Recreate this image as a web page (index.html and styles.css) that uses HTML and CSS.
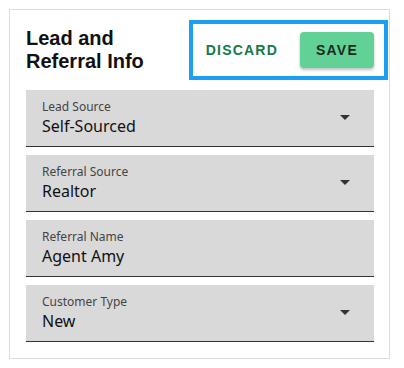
FILE: index.html
```html
<!DOCTYPE html>
<html lang="en">
<head>
    <meta charset="UTF-8">
    <title>Lead and Referral Info</title>
    <link rel="stylesheet" href="styles.css">
</head>
<body>
<div id="lead" class="card">
    <div class="header">
        <h2 class="title">Lead and<br>Referral Info</h2>
        <div class="actions">
            <button class="btn btn-text">Discard</button>
            <button class="btn btn-save">Save</button>
        </div>
    </div>
    <div class="fields">
        <div class="field select">
            <div class="field-body">
                <span class="field-label">Lead Source</span>
                <span class="field-value">Self-Sourced</span>
            </div>
            <svg class="arrow" width="10" height="5" viewBox="0 0 10 5"><path d="M0 0h10L5 5z" fill="#333"/></svg>
        </div>
        <div class="field select">
            <div class="field-body">
                <span class="field-label">Referral Source</span>
                <span class="field-value">Realtor</span>
            </div>
            <svg class="arrow" width="10" height="5" viewBox="0 0 10 5"><path d="M0 0h10L5 5z" fill="#333"/></svg>
        </div>
        <div class="field">
            <div class="field-body">
                <span class="field-label">Referral Name</span>
                <span class="field-value">Agent Amy</span>
            </div>
        </div>
        <div class="field select">
            <div class="field-body">
                <span class="field-label">Customer Type</span>
                <span class="field-value">New</span>
            </div>
            <svg class="arrow" width="10" height="5" viewBox="0 0 10 5"><path d="M0 0h10L5 5z" fill="#333"/></svg>
        </div>
    </div>
</div>
</body>
</html>
```
FILE: styles.css
```css
body{
    margin: 0;
    background: #fff;
}
.card{
    box-sizing: border-box;
    width: 381px;
    margin: 9px 0 0 9px;
    padding: 17px 15px 16px 16px;
    border: 1px solid #dcdcdc;
    background: #fff;
}
.header{
    display: flex;
    align-items: center;
    justify-content: space-between;
    margin-bottom: 17px;
}
.title{
    margin: 0;
    font: bold 20px/23px "Liberation Sans", Arial, sans-serif;
    color: #111;
}
.actions{
    position: relative;
    display: flex;
    align-items: center;
    gap: 14px;
}
/* highlight frame drawn over the buttons */
.actions::after{
    content: "";
    position: absolute;
    top: -12px;
    right: -14px;
    bottom: -12px;
    left: -9px;
    border: 4px solid #1a9ff2;
    pointer-events: none;
}
.btn{
    font: bold 14px/20px "Liberation Sans", Arial, sans-serif;
    letter-spacing: 1.2px;
    text-transform: uppercase;
    border: none;
    cursor: pointer;
}
.btn-text{
    padding: 8px 8px;
    background: none;
    color: #137a48;
}
.btn-save{
    width: 74px;
    height: 36px;
    padding: 0;
    border-radius: 4px;
    background: #62d196;
    color: #1b2a22;
    box-shadow: 0 2px 3px rgba(0,0,0,.25);
}
.fields{
    display: flex;
    flex-direction: column;
    gap: 8px;
}
.field{
    display: flex;
    align-items: center;
    padding: 9px 24px 9px 16px;
    background: #d9d9d9;
    border-bottom: 1px solid #333;
}
.field-body{
    flex: 1;
    display: flex;
    flex-direction: column;
}
.field-label{
    font: 12px/16px "Noto Sans", "Open Sans", sans-serif;
    color: #444;
}
.field-value{
    font: 16px/22px "Noto Sans", "Open Sans", sans-serif;
    color: #111;
}
.arrow{
    display: block;
    margin-top: -2px;
}
```
